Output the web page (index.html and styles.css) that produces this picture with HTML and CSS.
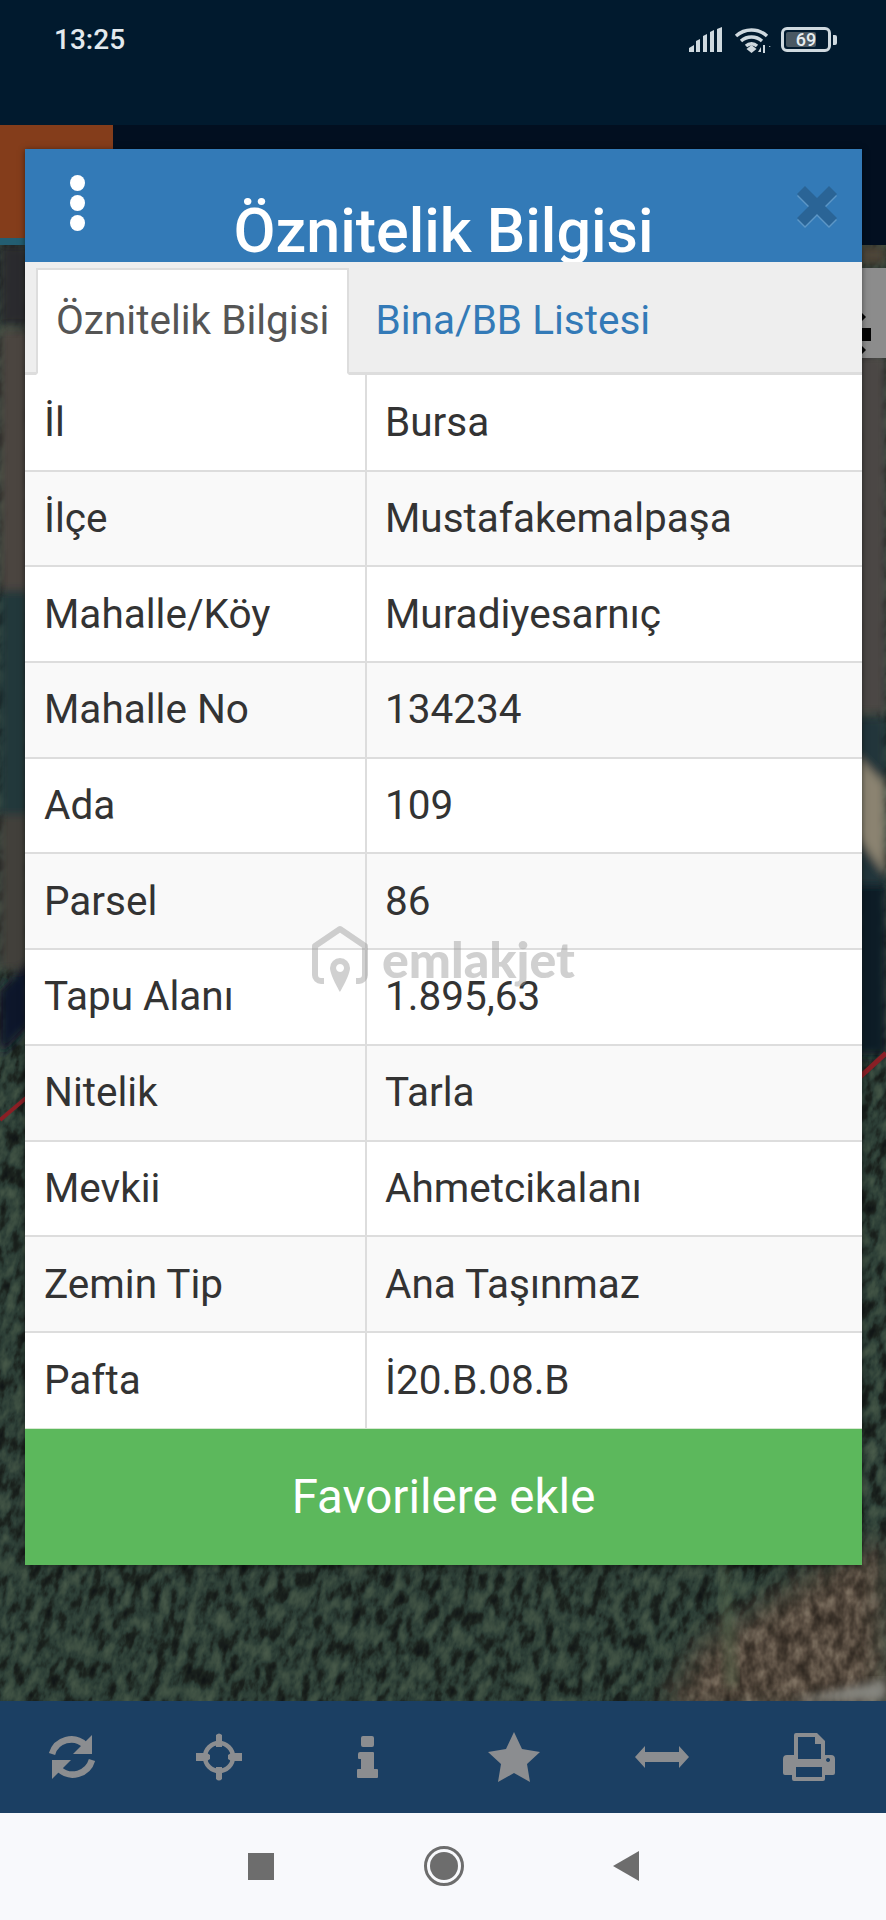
FILE: index.html
```html
<!DOCTYPE html>
<html lang="tr">
<head>
    <meta charset="UTF-8">
    <meta name="viewport" content="width=device-width, initial-scale=1.0">
    <title>Öznitelik Bilgisi</title>
    <link rel="stylesheet" href="styles.css">
</head>
<body>
    <div class="screen">
        <!-- Status bar + dark app header -->
        <header class="top">
            <div class="statusbar">
                <span class="clock">13:25</span>
                <div class="status-icons">
                    <svg class="ic-signal" width="34" height="25" viewBox="0 0 34 25">
                        <path d="M0 25v-4l5-3v7zM7 25V14l4-2v13zM14 25V9l4-2v18zM21 25V5l4-2v22zM28 25V2l5-2v25z"/>
                    </svg>
                    <svg class="ic-wifi" width="37" height="26" viewBox="0 0 37 26">
                        <path d="M2 9a23 23 0 0 1 31 0M7 14a16 16 0 0 1 21 0M12 19a8 8 0 0 1 11 0" fill="none" stroke-width="3.4"/>
                        <path class="solid" d="M17.500 18l5 4-5 4-5-4zM27 25v-5l-3 5zM29 18h2v8h-2zM33 20h2v-1l2 1h-4z"/>
                    </svg>
                    <div class="battery">
                        <div class="battery-fill"></div>
                        <span class="battery-num">69</span>
                    </div>
                    <div class="battery-tip"></div>
                </div>
            </div>
            <div class="top-lower">
                <div class="orange-tab"></div>
            </div>
        </header>

        <!-- Satellite map behind the dialog -->
        <div class="map">
            <svg class="map-img" width="886" height="1456" viewBox="0 0 886 1456">
                <defs>
                    <filter id="forest" x="0" y="0" width="100%" height="100%" color-interpolation-filters="sRGB">
                        <feTurbulence type="fractalNoise" baseFrequency="0.1 0.05" numOctaves="4" seed="11"/>
                        <feColorMatrix values="1 0 0 0 0 1 0 0 0 0 1 0 0 0 0 0 0 0 0 1"/>
                        <feComponentTransfer>
                            <feFuncR type="table" tableValues="0.05 0.07 0.11 0.17 0.23 0.27 0.3"/>
                            <feFuncG type="table" tableValues="0.07 0.09 0.14 0.24 0.3 0.34 0.37"/>
                            <feFuncB type="table" tableValues="0.07 0.09 0.12 0.21 0.25 0.28 0.3"/>
                        </feComponentTransfer>
                    </filter>
                    <filter id="ground" x="0" y="0" width="100%" height="100%" color-interpolation-filters="sRGB">
                        <feTurbulence type="fractalNoise" baseFrequency="0.09 0.06" numOctaves="3" seed="4"/>
                        <feColorMatrix values="1 0 0 0 0 1 0 0 0 0 1 0 0 0 0 0 0 0 0 1"/>
                        <feComponentTransfer>
                            <feFuncR type="table" tableValues="0.14 0.2 0.28 0.38 0.48 0.54"/>
                            <feFuncG type="table" tableValues="0.12 0.17 0.24 0.33 0.43 0.48"/>
                            <feFuncB type="table" tableValues="0.11 0.14 0.2 0.28 0.37 0.42"/>
                        </feComponentTransfer>
                    </filter>
                    <filter id="soft"><feGaussianBlur stdDeviation="5"/></filter>
                    <filter id="softer"><feGaussianBlur stdDeviation="14"/></filter>
                    <mask id="ground-mask" maskUnits="userSpaceOnUse" x="600" y="1280" width="286" height="176">
                        <path d="M834 1315L886 1295V1470H660L700 1400Z" fill="#fff" filter="url(#softer)"/>
                    </mask>
                </defs>
                <g transform="rotate(14 443 728)">
                    <rect x="-300" y="-300" width="1500" height="2100" filter="url(#forest)"/>
                </g>
                <g mask="url(#ground-mask)">
                    <rect x="600" y="1280" width="286" height="176" filter="url(#ground)"/>
                </g>
                <path d="M720 1322h8l10 120h-12z" fill="#5d6f53" opacity="0.55" filter="url(#soft)"/>
                <path d="M790 1456l96-22v22z" fill="#85857f" filter="url(#soft)"/>
                <g filter="url(#soft)">
                    <path d="M0 0H30V80H0z" fill="#2b2b2f"/>
                    <path d="M0 85H30V345H0z" fill="#4b4440"/>
                    <path d="M0 345H30V570H0z" fill="#22373a"/>
                    <path d="M0 570H30V725H0z" fill="#423f3b"/>
                    <path d="M0 745L30 715V780L0 810z" fill="#10192b"/>
                    <path d="M856 0H886V20H856z" fill="#4d4439"/>
                    <path d="M856 110H886V468H856z" fill="#4b4644"/>
                    <path d="M856 472H886V640H856z" fill="#22343a"/>
                    <path d="M856 510L886 540V630L856 590z" fill="#8b8371"/>
                    <path d="M856 640H886V810H856z" fill="#111c28"/>
                </g>
                <path d="M0 875L26 853" stroke="#8a1f25" stroke-width="4" fill="none"/>
                <path d="M860 832L886 808" stroke="#8a1f25" stroke-width="5" fill="none"/>
                <rect x="862" y="23" width="24" height="90" fill="#8c8c8c"/>
                <path d="M862 68l4 4-4 4zM862 83h9v13h-9zM862 101l4 4-4 4z" fill="#050505"/>
            </svg>
        </div>

        <!-- Toolbar -->
        <nav class="toolbar">
            <svg width="48" height="48" viewBox="0 0 48 48">
                <path d="M4 21A20 20 0 0 1 37 12M44 27A20 20 0 0 1 11 36" fill="none" stroke-width="6.500"/>
                <path class="solid" d="M44 2v19H25zM4 46V27h19z"/>
            </svg>
            <svg width="48" height="48" viewBox="0 0 48 48">
                <circle cx="24" cy="24" r="14" fill="none" stroke-width="4.500"/>
                <path class="solid" d="M21 2q3-3 6 0v12h-6zM21 34h6v12q-3 3-6 0zM1 20h11l3 2v4l-3 2H1zM47 20H36l-3 2v4l3 2h11z"/>
            </svg>
            <svg width="48" height="48" viewBox="0 0 48 48">
                <path class="solid" d="M20 3h9a2 2 0 0 1 2 2v7a2 2 0 0 1-2 2h-9a2 2 0 0 1-2-2V5a2 2 0 0 1 2-2zM17 19h13a1 1 0 0 1 1 1v16h3a1 1 0 0 1 1 1v7a1 1 0 0 1-1 1H15a1 1 0 0 1-1-1v-7a1 1 0 0 1 1-1h3V26h-2a1 1 0 0 1-1-1v-4a2 2 0 0 1 2-2z"/>
            </svg>
            <svg width="52" height="50" viewBox="0 0 52 50">
                <path class="solid" d="M26 0l8 17 18 3-13 12 3 18-16-9-16 9 3-18L0 20l18-3z"/>
            </svg>
            <svg width="54" height="22" viewBox="0 0 54 22">
                <path class="solid" d="M0 11L10 0v6h34V0l10 11-10 11v-6H10v6z"/>
            </svg>
            <svg width="52" height="48" viewBox="0 0 52 48">
                <path class="solid" fill-rule="evenodd" d="M11 2a2 2 0 0 1 2-2h21l8 8v14h6a4 4 0 0 1 4 4v14a2 2 0 0 1-2 2h-8v4a2 2 0 0 1-2 2H11a2 2 0 0 1-2-2v-4H2a2 2 0 0 1-2-2V26a4 4 0 0 1 4-4h7zM15 4v22h23V11h-6V4zM13 34v10h26V34zM45 25a2 2 0 1 0 .1 0z"/>
            </svg>
        </nav>

        <!-- Android nav buttons -->
        <footer class="navbar">
            <div class="nav-square"></div>
            <div class="nav-circle"><div class="nav-dot"></div></div>
            <div class="nav-back"></div>
        </footer>

        <!-- Dialog -->
        <div class="dialog">
            <div class="dialog-head">
                <div class="menu-dots"><i></i><i></i><i></i></div>
                <h1 class="dialog-title">Öznitelik Bilgisi</h1>
                <svg class="close-x" width="42" height="44" viewBox="0 0 42 44">
                    <path class="close-shadow" d="M9 3l12 12L33 3l8 8-12 12 12 12-8 8-12-12L9 43l-8-8 12-12L1 11z"/>
                    <path d="M9 1l12 12L33 1l8 8-12 12 12 12-8 8-12-12L9 41l-8-8 12-12L1 9z"/>
                </svg>
            </div>

            <ul class="tabs">
                <li class="tab active">Öznitelik Bilgisi</li>
                <li class="tab">Bina/BB Listesi</li>
            </ul>

            <table class="attrs">
                <tr><td>İl</td><td>Bursa</td></tr>
                <tr><td>İlçe</td><td>Mustafakemalpaşa</td></tr>
                <tr><td>Mahalle/Köy</td><td>Muradiyesarnıç</td></tr>
                <tr><td>Mahalle No</td><td>134234</td></tr>
                <tr><td>Ada</td><td>109</td></tr>
                <tr><td>Parsel</td><td>86</td></tr>
                <tr><td>Tapu Alanı</td><td>1.895,63</td></tr>
                <tr><td>Nitelik</td><td>Tarla</td></tr>
                <tr><td>Mevkii</td><td>Ahmetcikalanı</td></tr>
                <tr><td>Zemin Tip</td><td>Ana Taşınmaz</td></tr>
                <tr><td>Pafta</td><td>İ20.B.08.B</td></tr>
            </table>

            <button class="fav-btn" type="button">Favorilere ekle</button>
        </div>

        <!-- Watermark over the screenshot -->
        <div class="watermark">
            <svg width="56" height="68" viewBox="0 0 56 68">
                <path d="M12 56H9a6 6 0 0 1-6-6V21L28 4l25 17v29a6 6 0 0 1-6 6h-3" fill="none" stroke-width="6" stroke-linejoin="round"/>
                <path d="M28 33a10 10 0 0 1 10 10c0 7-10 24-10 24S18 50 18 43a10 10 0 0 1 10-10zM28 39a4 4 0 1 0 .1 0z" fill-rule="evenodd" class="pin"/>
            </svg>
            <span class="watermark-text">emlakjet</span>
        </div>
    </div>
</body>
</html>
```

FILE: styles.css
```css
* {
    box-sizing: border-box;
    margin: 0;
    padding: 0;
}

body {
    font-family: Roboto, "Liberation Sans", sans-serif;
    background-color: #011a2e;
}

.screen {
    position: relative;
    width: 886px;
    height: 1920px;
    display: flex;
    flex-direction: column;
    overflow: hidden;
}

/* Top */
.top {
    height: 245px;
    background-color: #011a2e;
    display: flex;
    flex-direction: column;
}

.statusbar {
    height: 125px;
    padding: 27px 49px 0 54px;
    display: flex;
    justify-content: space-between;
    align-items: flex-start;
}

.clock {
    font-size: 28px;
    font-weight: 500;
    line-height: 25px;
    color: #e3e9ed;
}

.status-icons {
    display: flex;
    align-items: center;
    height: 25px;
}

.ic-signal {
    fill: #cfd9df;
    margin-right: 11px;
}

.ic-wifi {
    stroke: #cfd9df;
    margin-right: 10px;
}

.ic-wifi .solid {
    fill: #cfd9df;
    stroke: none;
}

.battery {
    position: relative;
    width: 50px;
    height: 25px;
    border: 3px solid #cfd9df;
    border-radius: 6px;
    display: flex;
    align-items: center;
    justify-content: center;
}

.battery-fill {
    position: absolute;
    left: 2px;
    top: 2px;
    bottom: 2px;
    width: 30px;
    background-color: #4a5862;
    border-radius: 2px;
}

.battery-num {
    position: relative;
    font-size: 18px;
    font-weight: 500;
    color: #e6ecef;
}

.battery-tip {
    width: 4px;
    height: 10px;
    margin-left: 2px;
    background-color: #cfd9df;
    border-radius: 0 2px 2px 0;
}

.top-lower {
    flex: 1;
    background-color: #020f20;
}

.orange-tab {
    width: 113px;
    height: 120px;
    background-color: #843d1b;
    border-bottom: 7px solid #235e72;
}

/* Map */
.map {
    flex: 1;
    overflow: hidden;
    background-color: #26332e;
}

.map-img {
    display: block;
}

/* Toolbar */
.toolbar {
    height: 112px;
    margin-left: -2px;
    padding-right: 3px;
    background-color: #1b3f63;
    display: grid;
    grid-template-columns: repeat(6, 1fr);
    justify-items: center;
    align-items: center;
}

.toolbar svg {
    stroke: #8b8d90;
    fill: none;
}

.toolbar .solid {
    fill: #8b8d90;
    stroke: none;
}

/* Navigation */
.navbar {
    height: 107px;
    background-color: #f8f9fc;
    display: flex;
    justify-content: center;
    align-items: center;
    padding-bottom: 1px;
}

.nav-square {
    width: 26px;
    height: 27px;
    background-color: #6d6d6d;
    margin-right: 150px;
}

.nav-circle {
    width: 40px;
    height: 40px;
    border: 3px solid #6d6d6d;
    border-radius: 50%;
    display: flex;
    align-items: center;
    justify-content: center;
    margin-right: 149px;
}

.nav-dot {
    width: 28px;
    height: 28px;
    background-color: #6d6d6d;
    border-radius: 50%;
}

.nav-back {
    width: 0;
    height: 0;
    border-top: 15px solid transparent;
    border-bottom: 15px solid transparent;
    border-right: 26px solid #6d6d6d;
}

/* Dialog */
.dialog {
    position: absolute;
    left: 25px;
    top: 149px;
    width: 837px;
    height: 1416px;
    display: flex;
    flex-direction: column;
    box-shadow: 0 1px 6px rgba(0, 0, 0, 0.5);
}

.dialog-head {
    position: relative;
    height: 113px;
    background-color: #337ab7;
    overflow: hidden;
    text-align: center;
}

.dialog-title {
    padding-top: 47px;
    font-size: 61px;
    line-height: 70px;
    font-weight: 500;
    color: #fff;
}

.menu-dots {
    position: absolute;
    left: 45px;
    top: 26px;
    display: flex;
    flex-direction: column;
    gap: 4px;
}

.menu-dots i {
    display: block;
    width: 15px;
    height: 16px;
    background-color: #fff;
    border-radius: 50%;
}

.close-x {
    position: absolute;
    left: 771px;
    top: 36px;
    fill: #2a6496;
}

.close-x .close-shadow {
    fill: #5c96c6;
}

.tabs {
    height: 113px;
    list-style: none;
    background-color: #eee;
    border-bottom: 3px solid #ddd;
    display: flex;
    align-items: flex-end;
    padding-left: 11px;
}

.tab {
    height: 107px;
    margin-bottom: -3px;
    padding: 0 18px 0 24px;
    font-size: 40.5px;
    line-height: 101px;
    color: #337ab7;
    border: 2px solid transparent;
}

.tab.active {
    padding: 0 18px;
    color: #555;
    background-color: #fff;
    border-color: #ddd;
    border-bottom-color: #fff;
}

.attrs {
    width: 837px;
    border-collapse: collapse;
    table-layout: fixed;
    background-color: #fff;
}

.attrs tr {
    height: 95.7px;
}

.attrs tr:nth-child(even) {
    background-color: #f9f9f9;
}

.attrs td {
    padding: 0 18px 1px;
    font-size: 40.5px;
    color: #333;
    border-top: 2px solid #ddd;
    border-left: 2px solid #ddd;
    vertical-align: middle;
}

.attrs tr:first-child td {
    border-top: 0;
}

.attrs td:first-child {
    width: 341px;
    padding-left: 19px;
    border-left: 0;
}

.fav-btn {
    flex: 1;
    border: 0;
    border-top: 1px solid #d7e8d2;
    background-color: #5cb85c;
    color: #fff;
    font-family: inherit;
    font-size: 47.5px;
}

/* Watermark */
.watermark {
    position: absolute;
    left: 312px;
    top: 925px;
    display: flex;
    align-items: flex-start;
    gap: 14px;
    pointer-events: none;
}

.watermark svg {
    stroke: rgba(150, 150, 150, 0.45);
}

.watermark .pin {
    fill: rgba(150, 150, 150, 0.45);
    stroke: none;
}

.watermark-text {
    font-family: Lato, Roboto, sans-serif;
    font-weight: 900;
    font-size: 50px;
    line-height: 68px;
    color: rgba(150, 150, 150, 0.45);
}
```
